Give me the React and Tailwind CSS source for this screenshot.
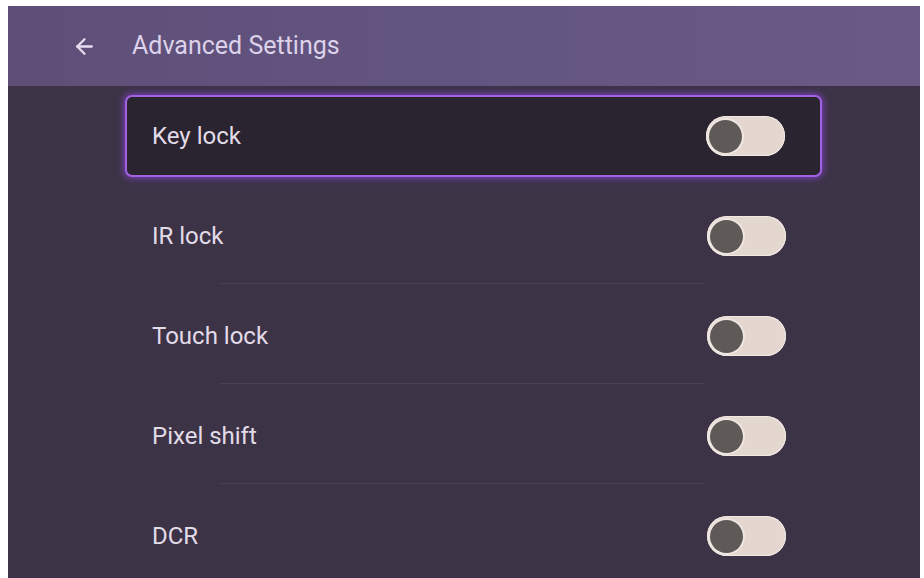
import { ArrowLeft } from "lucide-react";

const items = ["Key lock", "IR lock", "Touch lock", "Pixel shift", "DCR"];

const Toggle = () => (
  <div className="w-[79px] h-[40px] rounded-full bg-[#e4d7cf] flex items-center pl-[3px] shadow-[inset_0_0_0_1px_#f1e9e4]">
    <div className="w-[33px] h-[33px] rounded-full bg-[#5f5a57] ring-[2px] ring-[#efe6e1]" />
  </div>
);

const Row = ({ label, focused, last }) => (
  <div className="h-[100px] flex flex-col justify-center relative">
    <div
      className={
        focused
          ? "h-[82px] flex items-center justify-between pl-[25px] pr-[35px] rounded-[7px] border-2 border-[#a263e0] bg-[#2a2431] shadow-[0_0_7px_1px_#7d3fc4]"
          : "h-[82px] flex items-center justify-between pl-[27px] pr-[36px]"
      }
    >
      <span className="text-[24px] text-[#e2dce8]">{label}</span>
      <Toggle />
    </div>
    {!focused && !last && (
      <div className="absolute bottom-[2px] left-[95px] w-[485px] h-px bg-[#494053]" />
    )}
  </div>
);

export default function App() {
  return (
    <div
      className="w-[924px] h-[578px] bg-white pt-[6px] pl-[8px] pr-[4px] overflow-hidden"
      style={{ fontFamily: "Roboto, 'Noto Sans', sans-serif" }}
    >
      <div className="h-full flex flex-col bg-[#3d3346] overflow-hidden">
        <header className="h-[80px] shrink-0 flex items-center pl-[64px] bg-gradient-to-r from-[#5e4f78] via-[#635581] to-[#6a5985]">
          <ArrowLeft size={25} strokeWidth={2.2} className="text-[#e6dcf0]" />
          <span className="ml-[35px] text-[25px] text-[#ddd2ea]">
            Advanced Settings
          </span>
        </header>
        <div className="ml-[117px] w-[697px] flex flex-col">
          {items.map((label, i) => (
            <Row key={label} label={label} focused={i === 0} last={i === items.length - 1} />
          ))}
        </div>
      </div>
    </div>
  );
}
